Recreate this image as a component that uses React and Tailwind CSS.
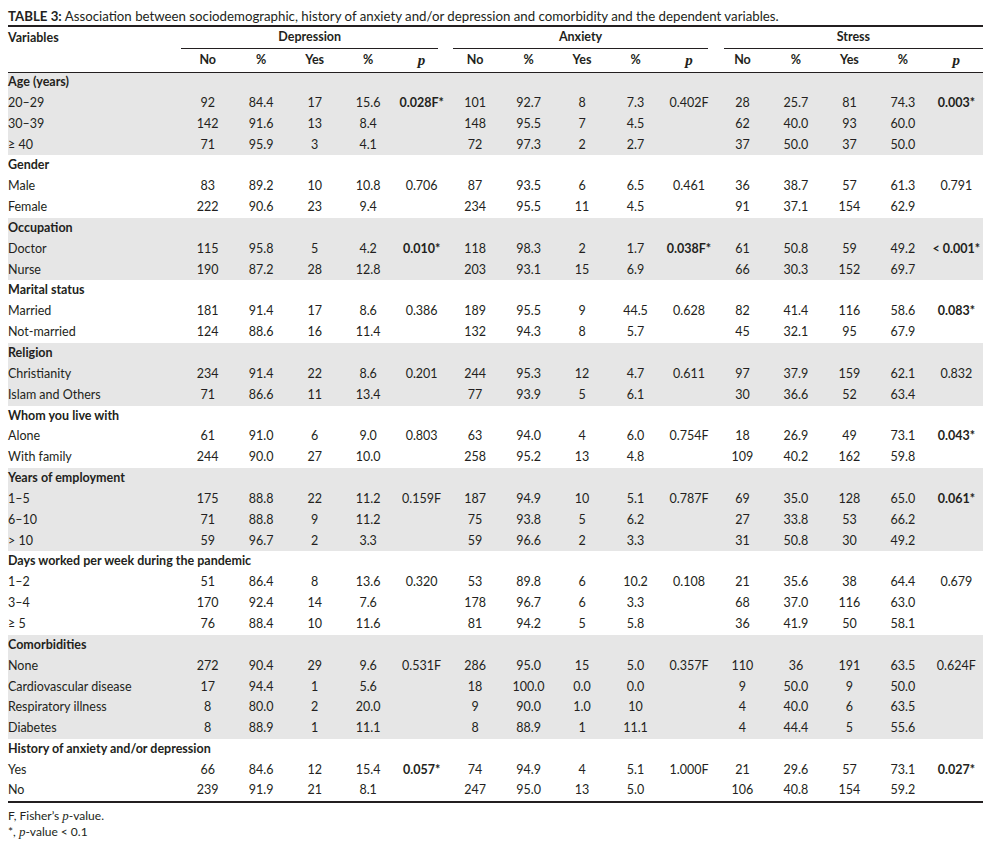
import React from "react";

// "!" in front of a value means it is printed bold
const groups = [
  {
    title: "Age (years)",
    gray: true,
    rows: [
      ["20–29", "92", "84.4", "17", "15.6", "!0.028F*", "101", "92.7", "8", "7.3", "0.402F", "28", "25.7", "81", "74.3", "!0.003*"],
      ["30–39", "142", "91.6", "13", "8.4", "", "148", "95.5", "7", "4.5", "", "62", "40.0", "93", "60.0", ""],
      ["≥ 40", "71", "95.9", "3", "4.1", "", "72", "97.3", "2", "2.7", "", "37", "50.0", "37", "50.0", ""],
    ],
  },
  {
    title: "Gender",
    gray: false,
    rows: [
      ["Male", "83", "89.2", "10", "10.8", "0.706", "87", "93.5", "6", "6.5", "0.461", "36", "38.7", "57", "61.3", "0.791"],
      ["Female", "222", "90.6", "23", "9.4", "", "234", "95.5", "11", "4.5", "", "91", "37.1", "154", "62.9", ""],
    ],
  },
  {
    title: "Occupation",
    gray: true,
    rows: [
      ["Doctor", "115", "95.8", "5", "4.2", "!0.010*", "118", "98.3", "2", "1.7", "!0.038F*", "61", "50.8", "59", "49.2", "!< 0.001*"],
      ["Nurse", "190", "87.2", "28", "12.8", "", "203", "93.1", "15", "6.9", "", "66", "30.3", "152", "69.7", ""],
    ],
  },
  {
    title: "Marital status",
    gray: false,
    rows: [
      ["Married", "181", "91.4", "17", "8.6", "0.386", "189", "95.5", "9", "44.5", "0.628", "82", "41.4", "116", "58.6", "!0.083*"],
      ["Not-married", "124", "88.6", "16", "11.4", "", "132", "94.3", "8", "5.7", "", "45", "32.1", "95", "67.9", ""],
    ],
  },
  {
    title: "Religion",
    gray: true,
    rows: [
      ["Christianity", "234", "91.4", "22", "8.6", "0.201", "244", "95.3", "12", "4.7", "0.611", "97", "37.9", "159", "62.1", "0.832"],
      ["Islam and Others", "71", "86.6", "11", "13.4", "", "77", "93.9", "5", "6.1", "", "30", "36.6", "52", "63.4", ""],
    ],
  },
  {
    title: "Whom you live with",
    gray: false,
    rows: [
      ["Alone", "61", "91.0", "6", "9.0", "0.803", "63", "94.0", "4", "6.0", "0.754F", "18", "26.9", "49", "73.1", "!0.043*"],
      ["With family", "244", "90.0", "27", "10.0", "", "258", "95.2", "13", "4.8", "", "109", "40.2", "162", "59.8", ""],
    ],
  },
  {
    title: "Years of employment",
    gray: true,
    rows: [
      ["1–5", "175", "88.8", "22", "11.2", "0.159F", "187", "94.9", "10", "5.1", "0.787F", "69", "35.0", "128", "65.0", "!0.061*"],
      ["6–10", "71", "88.8", "9", "11.2", "", "75", "93.8", "5", "6.2", "", "27", "33.8", "53", "66.2", ""],
      ["> 10", "59", "96.7", "2", "3.3", "", "59", "96.6", "2", "3.3", "", "31", "50.8", "30", "49.2", ""],
    ],
  },
  {
    title: "Days worked per week during the pandemic",
    gray: false,
    rows: [
      ["1–2", "51", "86.4", "8", "13.6", "0.320", "53", "89.8", "6", "10.2", "0.108", "21", "35.6", "38", "64.4", "0.679"],
      ["3–4", "170", "92.4", "14", "7.6", "", "178", "96.7", "6", "3.3", "", "68", "37.0", "116", "63.0", ""],
      ["≥ 5", "76", "88.4", "10", "11.6", "", "81", "94.2", "5", "5.8", "", "36", "41.9", "50", "58.1", ""],
    ],
  },
  {
    title: "Comorbidities",
    gray: true,
    rows: [
      ["None", "272", "90.4", "29", "9.6", "0.531F", "286", "95.0", "15", "5.0", "0.357F", "110", "36", "191", "63.5", "0.624F"],
      ["Cardiovascular disease", "17", "94.4", "1", "5.6", "", "18", "100.0", "0.0", "0.0", "", "9", "50.0", "9", "50.0", ""],
      ["Respiratory illness", "8", "80.0", "2", "20.0", "", "9", "90.0", "1.0", "10", "", "4", "40.0", "6", "63.5", ""],
      ["Diabetes", "8", "88.9", "1", "11.1", "", "8", "88.9", "1", "11.1", "", "4", "44.4", "5", "55.6", ""],
    ],
  },
  {
    title: "History of anxiety and/or depression",
    gray: false,
    rows: [
      ["Yes", "66", "84.6", "12", "15.4", "!0.057*", "74", "94.9", "4", "5.1", "1.000F", "21", "29.6", "57", "73.1", "!0.027*"],
      ["No", "239", "91.9", "21", "8.1", "", "247", "95.0", "13", "5.0", "", "106", "40.8", "154", "59.2", ""],
    ],
  },
];

const subHeads = ["No", "%", "Yes", "%", "p"];

const P = () => (
  <span className="font-['Liberation_Serif',serif] italic font-bold text-[15px]">p</span>
);

const Cell = ({ value }) => {
  const bold = value.startsWith("!");
  return (
    <td className={`p-0 text-center whitespace-nowrap ${bold ? "font-bold" : ""}`}>
      {bold ? value.slice(1) : value}
    </td>
  );
};

const App = () => {
  return (
    <div className="min-h-screen bg-white text-[#231f20] font-['Lato','Liberation_Sans',sans-serif] text-[12.5px] px-2 pt-[9px]">
      <div className="w-[975px]">
        <div className="border-b-[2.5px] border-[#231f20] pb-[1px] text-[13.25px] leading-[15px]">
          <span className="font-bold">TABLE 3:</span> Association between sociodemographic, history of anxiety and/or depression and comorbidity and the dependent variables.
        </div>

        <table className="w-[975px] table-fixed border-collapse">
          <colgroup>
            <col className="w-[173px]" />
            {Array.from({ length: 15 }).map((_, i) => (
              <col key={i} className="w-[53.47px]" />
            ))}
          </colgroup>
          <thead>
            <tr className="h-[22px]">
              <th className="p-0 text-left font-bold align-middle">Variables</th>
              <th colSpan={5} className="p-0 font-bold">
                <div className="mr-[10px] h-[22px] flex items-center justify-center border-b border-[#231f20]">Depression</div>
              </th>
              <th colSpan={5} className="p-0 font-bold">
                <div className="ml-[5px] mr-[8px] h-[22px] flex items-center justify-center border-b border-[#231f20]">Anxiety</div>
              </th>
              <th colSpan={5} className="p-0 font-bold">
                <div className="ml-[8px] h-[22px] flex items-center justify-center border-b border-[#231f20]">Stress</div>
              </th>
            </tr>
            <tr className="h-[21px] border-b-[1.5px] border-[#231f20]">
              <th className="p-0" />
              {[0, 1, 2].map((g) =>
                subHeads.map((h, i) => (
                  <th key={`${g}-${i}`} className="p-0 text-center font-bold">
                    {h === "p" ? <P /> : h}
                  </th>
                ))
              )}
            </tr>
          </thead>
          <tbody className="border-b-[2.5px] border-[#231f20]">
            {groups.map((group) => (
              <React.Fragment key={group.title}>
                <tr className={`h-[20.85px] ${group.gray ? "bg-[#e6e6e6]" : "bg-white"}`}>
                  <td colSpan={16} className="p-0 font-bold whitespace-nowrap">
                    {group.title}
                  </td>
                </tr>
                {group.rows.map((row) => (
                  <tr
                    key={row[0]}
                    className={`h-[20.85px] ${group.gray ? "bg-[#e6e6e6]" : "bg-white"}`}
                  >
                    <td className="p-0 whitespace-nowrap">{row[0]}</td>
                    {row.slice(1).map((v, i) => (
                      <Cell key={i} value={v} />
                    ))}
                  </tr>
                ))}
              </React.Fragment>
            ))}
          </tbody>
        </table>

        <div className="mt-[5px] text-[12px] leading-[16px]">
          <p>
            F, Fisher’s <span className="font-['Liberation_Serif',serif] italic text-[13px]">p</span>-value.
          </p>
          <p>
            *, <span className="font-['Liberation_Serif',serif] italic text-[13px]">p</span>-value &lt; 0.1
          </p>
        </div>
      </div>
    </div>
  );
};

export default App;
